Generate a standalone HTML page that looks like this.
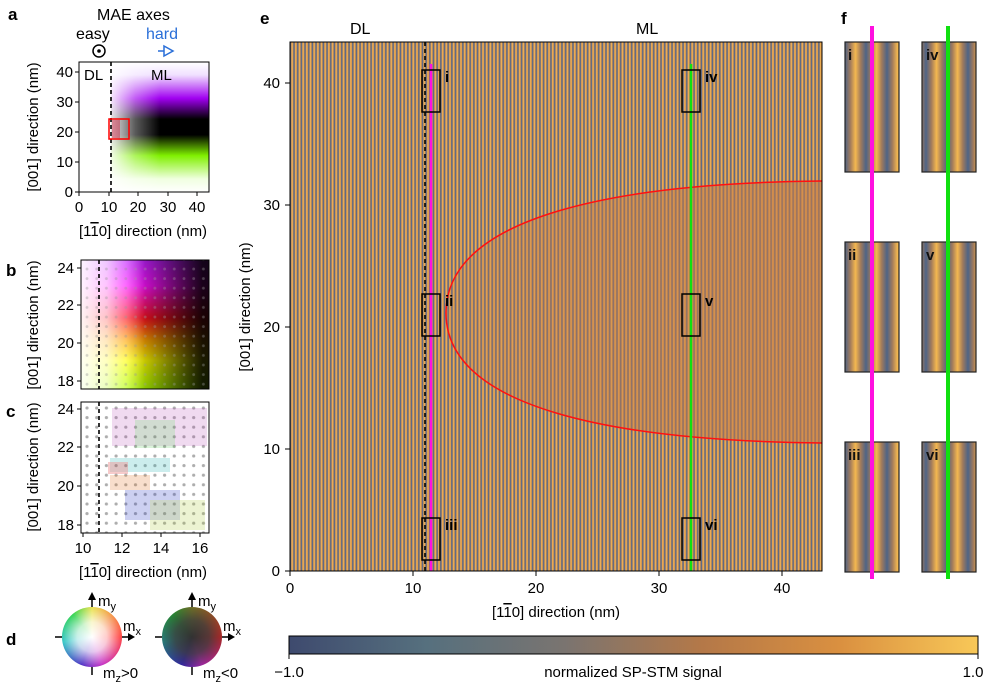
<!DOCTYPE html>
<html><head><meta charset="utf-8"><style>
html,body{margin:0;padding:0;background:#fff;}
svg{display:block;font-family:"Liberation Sans",Arial,sans-serif;}
.sph{position:absolute;width:60px;height:60px;border-radius:50%;}
</style></head><body>
<div style="position:relative;width:996px;height:684px;">
<svg width="996" height="684" viewBox="0 0 996 684" xmlns="http://www.w3.org/2000/svg" style="position:absolute;left:0;top:0">
<defs>
 <linearGradient id="stripe" x1="0" x2="1" y1="0" y2="0">
  <stop offset="0" stop-color="#56688a"/><stop offset="0.2" stop-color="#5e6a86"/>
  <stop offset="0.45" stop-color="#e8a04c"/><stop offset="0.6" stop-color="#f6bc58"/>
  <stop offset="0.8" stop-color="#d8924a"/>
  <stop offset="1" stop-color="#56688a"/>
 </linearGradient>
 <linearGradient id="stripeF" x1="0" x2="1" y1="0" y2="0">
  <stop offset="0" stop-color="#4e6486"/><stop offset="0.25" stop-color="#a07a5c"/>
  <stop offset="0.5" stop-color="#f4b850"/><stop offset="0.75" stop-color="#a07a5c"/>
  <stop offset="1" stop-color="#4e6486"/>
 </linearGradient>
 <pattern id="pe" x="290" y="0" width="3.67" height="10" patternUnits="userSpaceOnUse">
  <rect width="3.67" height="10" fill="url(#stripe)"/>
 </pattern>
 <pattern id="pf" x="845" y="0" width="21" height="10" patternUnits="userSpaceOnUse">
  <rect width="21" height="10" fill="url(#stripeF)"/>
 </pattern>
 <pattern id="pf2" x="926" y="0" width="21" height="10" patternUnits="userSpaceOnUse">
  <rect width="21" height="10" fill="url(#stripeF)"/>
 </pattern>
 <linearGradient id="fade" x1="0" x2="1">
  <stop offset="0" stop-color="#c07a4a" stop-opacity="0.15"/>
  <stop offset="0.3" stop-color="#c07a4a" stop-opacity="0.4"/>
  <stop offset="1" stop-color="#c47c48" stop-opacity="0.6"/>
 </linearGradient>
 <linearGradient id="cbar" x1="0" x2="1">
  <stop offset="0" stop-color="#3e4a6e"/><stop offset="0.2" stop-color="#56707e"/>
  <stop offset="0.4" stop-color="#7a7470"/><stop offset="0.6" stop-color="#b47848"/>
  <stop offset="0.8" stop-color="#da9040"/><stop offset="1" stop-color="#f8c858"/>
 </linearGradient>
 <linearGradient id="aV" x1="0" x2="0" y1="0" y2="1">
  <stop offset="0" stop-color="#ffffff"/><stop offset="0.1" stop-color="#f0e0ff"/>
  <stop offset="0.28" stop-color="#a000f0"/>
  <stop offset="0.44" stop-color="#000"/><stop offset="0.56" stop-color="#000"/>
  <stop offset="0.72" stop-color="#80f000"/><stop offset="0.9" stop-color="#f0ffe0"/><stop offset="1" stop-color="#ffffff"/>
 </linearGradient>
 <radialGradient id="aH" cx="0" cy="0.5" r="1" fx="0" fy="0.5" gradientTransform="translate(0,0) scale(1,1)">
  <stop offset="0" stop-color="#fff" stop-opacity="0"/>
  <stop offset="1" stop-color="#fff" stop-opacity="0"/>
 </radialGradient>
 <linearGradient id="aL" x1="0" x2="1">
  <stop offset="0" stop-color="#fff" stop-opacity="0.9"/><stop offset="0.25" stop-color="#fff" stop-opacity="0.35"/>
  <stop offset="0.5" stop-color="#fff" stop-opacity="0"/>
 </linearGradient>
 <linearGradient id="bV" x1="0" x2="0" y1="0" y2="1">
  <stop offset="0" stop-color="#c020ff"/><stop offset="0.2" stop-color="#ff10ff"/>
  <stop offset="0.45" stop-color="#ff1020"/><stop offset="0.62" stop-color="#ffa000"/>
  <stop offset="0.78" stop-color="#ffff00"/><stop offset="1" stop-color="#b0ff00"/>
 </linearGradient>
 <linearGradient id="bK" x1="0" x2="1">
  <stop offset="0.35" stop-color="#000" stop-opacity="0"/><stop offset="0.95" stop-color="#000" stop-opacity="0.9"/>
 </linearGradient>
 <linearGradient id="bW" x1="0" x2="1">
  <stop offset="0" stop-color="#fff" stop-opacity="0.95"/><stop offset="0.2" stop-color="#fff" stop-opacity="0.75"/>
  <stop offset="0.5" stop-color="#fff" stop-opacity="0"/>
 </linearGradient>
 <pattern id="dots" x="84" y="266" width="9.7" height="9.6" patternUnits="userSpaceOnUse">
  <circle cx="3" cy="3" r="1.4" fill="#999" fill-opacity="0.4"/>
 </pattern>
 <pattern id="dotsc" x="84" y="405" width="9.7" height="9.6" patternUnits="userSpaceOnUse">
  <circle cx="3" cy="3" r="1.6" fill="#777"/>
 </pattern>
 <clipPath id="ce"><rect x="290" y="42" width="532" height="529"/></clipPath>
</defs>

<g font-weight="bold" font-size="17">
<text x="8" y="20">a</text><text x="6" y="276">b</text><text x="6" y="417">c</text>
<text x="6" y="645">d</text><text x="260" y="24">e</text><text x="841" y="24">f</text>
</g>

<!-- panel a -->
<text x="97" y="20" font-size="16">MAE axes</text>
<text x="76" y="39" font-size="16">easy</text>
<text x="146" y="39" font-size="16" fill="#2a6fd8">hard</text>
<circle cx="99" cy="51" r="6" fill="none" stroke="#000" stroke-width="1.5"/><circle cx="99" cy="51" r="1.8"/>
<path d="M158,51 H164 M164,46 L173,51 L164,56Z" stroke="#2a6fd8" stroke-width="1.5" fill="none"/>
<rect x="111" y="62" width="98" height="130" fill="url(#aV)"/>
<rect x="111" y="62" width="98" height="130" fill="url(#aL)"/>
<rect x="112" y="120" width="8" height="18" fill="#d02040" opacity="0.45"/>
<rect x="79" y="62" width="130" height="130" fill="none" stroke="#000" stroke-width="1"/>
<line x1="111" y1="62" x2="111" y2="192" stroke="#000" stroke-width="1.6" stroke-dasharray="4,3"/>
<rect x="109" y="119" width="20" height="20" fill="none" stroke="#f00" stroke-width="1.5"/>
<text x="84" y="80" font-size="15">DL</text><text x="151" y="80" font-size="15">ML</text>
<g font-size="15" text-anchor="end">
<text x="73" y="77">40</text><text x="73" y="107">30</text><text x="73" y="137">20</text><text x="73" y="167">10</text><text x="73" y="197">0</text>
</g>
<g stroke="#000"><path d="M75,72H79M75,102H79M75,132H79M75,162H79M75,192H79M79,192V196M109,192V196M138,192V196M168,192V196M197,192V196"/></g>
<g font-size="15" text-anchor="middle">
<text x="79" y="212">0</text><text x="109" y="212">10</text><text x="138" y="212">20</text><text x="168" y="212">30</text><text x="197" y="212">40</text>
</g>
<text x="143" y="236" font-size="15" text-anchor="middle">[1<tspan text-decoration="overline">1</tspan>0] direction (nm)</text>
<text transform="translate(38,127) rotate(-90)" font-size="15" text-anchor="middle">[001] direction (nm)</text>

<!-- panel b -->
<rect x="81" y="260" width="128" height="129" fill="url(#bV)"/>
<rect x="81" y="260" width="128" height="129" fill="url(#bK)"/>
<rect x="81" y="260" width="128" height="129" fill="url(#bW)"/>
<rect x="81" y="260" width="128" height="129" fill="url(#dots)"/>
<rect x="81" y="260" width="128" height="129" fill="none" stroke="#000"/>
<line x1="99" y1="260" x2="99" y2="389" stroke="#000" stroke-width="1.6" stroke-dasharray="4,3"/>
<g font-size="15" text-anchor="end">
<text x="74" y="273">24</text><text x="74" y="310">22</text><text x="74" y="348">20</text><text x="74" y="386">18</text>
</g>
<path d="M77,268H81M77,305H81M77,343H81M77,381H81" stroke="#000"/>
<text transform="translate(38,325) rotate(-90)" font-size="15" text-anchor="middle">[001] direction (nm)</text>

<!-- panel c -->
<rect x="81" y="402" width="128" height="131" fill="#fff"/>
<rect x="81" y="402" width="128" height="131" fill="url(#dotsc)" opacity="0.6"/>
<g opacity="0.5">
<rect x="112" y="408" width="95" height="38" fill="#b030b0" opacity="0.35"/>
<rect x="135" y="420" width="40" height="28" fill="#30c030" opacity="0.35"/>
<rect x="110" y="458" width="60" height="14" fill="#20b0b0" opacity="0.45"/>
<rect x="108" y="462" width="20" height="12" fill="#e03030" opacity="0.5"/>
<rect x="110" y="475" width="40" height="15" fill="#e07020" opacity="0.45"/>
<rect x="125" y="490" width="55" height="30" fill="#2030c0" opacity="0.45"/>
<rect x="150" y="500" width="55" height="30" fill="#a0c020" opacity="0.4"/>
</g>
<rect x="81" y="402" width="128" height="131" fill="none" stroke="#000"/>
<line x1="99" y1="402" x2="99" y2="533" stroke="#000" stroke-width="1.6" stroke-dasharray="4,3"/>
<g font-size="15" text-anchor="end">
<text x="74" y="414">24</text><text x="74" y="452">22</text><text x="74" y="491">20</text><text x="74" y="530">18</text>
</g>
<path d="M77,409H81M77,447H81M77,486H81M77,525H81M83,533V537M122,533V537M161,533V537M200,533V537" stroke="#000"/>
<g font-size="15" text-anchor="middle">
<text x="83" y="553">10</text><text x="122" y="553">12</text><text x="161" y="553">14</text><text x="200" y="553">16</text>
</g>
<text x="143" y="577" font-size="15" text-anchor="middle">[1<tspan text-decoration="overline">1</tspan>0] direction (nm)</text>
<text transform="translate(38,467) rotate(-90)" font-size="15" text-anchor="middle">[001] direction (nm)</text>

<!-- panel d axes -->
<g stroke="#000" stroke-width="1.5">
<path d="M55,637H62M122,637H128M92,667V675M92,607V600"/>
<path d="M155,637H162M222,637H228M192,667V675M192,607V600"/>
</g>
<path d="M128,633L135,637L128,641Z M88,600L92,592L96,600Z M228,633L235,637L228,641Z M188,600L192,592L196,600Z"/>
<g font-size="15">
<text x="98" y="606">m<tspan font-size="11" dy="4">y</tspan></text>
<text x="123" y="631">m<tspan font-size="11" dy="4">x</tspan></text>
<text x="103" y="678">m<tspan font-size="11" dy="4">z</tspan><tspan dy="-4">&gt;0</tspan></text>
<text x="198" y="606">m<tspan font-size="11" dy="4">y</tspan></text>
<text x="223" y="631">m<tspan font-size="11" dy="4">x</tspan></text>
<text x="203" y="678">m<tspan font-size="11" dy="4">z</tspan><tspan dy="-4">&lt;0</tspan></text>
</g>

<!-- panel e -->
<text x="350" y="34" font-size="16">DL</text><text x="636" y="34" font-size="16">ML</text>
<rect x="290" y="42" width="532" height="529" fill="url(#pe)"/>
<g clip-path="url(#ce)">
<path d="M822,181 C620,183 446,215 446,313 C446,410 620,441 822,443 Z" fill="url(#fade)"/>
<path d="M822,181 C620,183 446,215 446,313 C446,410 620,441 822,443" fill="none" stroke="#ff1010" stroke-width="1.5"/>
</g>
<line x1="425" y1="42" x2="425" y2="571" stroke="#000" stroke-width="1.6" stroke-dasharray="4,3"/>
<line x1="431" y1="64" x2="431" y2="571" stroke="#ff10e0" stroke-width="2.5"/>
<line x1="691" y1="64" x2="691" y2="571" stroke="#10e010" stroke-width="2.5"/>
<g fill="none" stroke="#000" stroke-width="1.5">
<rect x="422" y="70" width="18" height="42"/><rect x="422" y="294" width="18" height="42"/><rect x="422" y="518" width="18" height="42"/>
<rect x="682" y="70" width="18" height="42"/><rect x="682" y="294" width="18" height="42"/><rect x="682" y="518" width="18" height="42"/>
</g>
<g font-size="15" font-weight="bold">
<text x="445" y="82">i</text><text x="445" y="306">ii</text><text x="445" y="530">iii</text>
<text x="705" y="82">iv</text><text x="705" y="306">v</text><text x="705" y="530">vi</text>
</g>
<rect x="290" y="42" width="532" height="529" fill="none" stroke="#000"/>
<g font-size="15" text-anchor="end">
<text x="280" y="88">40</text><text x="280" y="210">30</text><text x="280" y="332">20</text><text x="280" y="454">10</text><text x="280" y="576">0</text>
</g>
<path d="M285,83H290M285,205H290M285,327H290M285,449H290M285,571H290M290,571V576M413,571V576M536,571V576M659,571V576M782,571V576" stroke="#000"/>
<g font-size="15" text-anchor="middle">
<text x="290" y="593">0</text><text x="413" y="593">10</text><text x="536" y="593">20</text><text x="659" y="593">30</text><text x="782" y="593">40</text>
</g>
<text x="556" y="617" font-size="15" text-anchor="middle">[1<tspan text-decoration="overline">1</tspan>0] direction (nm)</text>
<text transform="translate(250,307) rotate(-90)" font-size="15" text-anchor="middle">[001] direction (nm)</text>

<rect x="289" y="636" width="689" height="18" fill="url(#cbar)" stroke="#000"/>
<path d="M289,654V659M978,654V659" stroke="#000"/>
<text x="289" y="677" font-size="15" text-anchor="middle">−1.0</text>
<text x="633" y="677" font-size="15" text-anchor="middle">normalized SP-STM signal</text>
<text x="973" y="677" font-size="15" text-anchor="middle">1.0</text>

<!-- panel f -->
<g stroke="#222" stroke-width="1.2">
<rect x="845" y="42" width="54" height="130" fill="url(#pf)"/>
<rect x="845" y="242" width="54" height="130" fill="url(#pf)"/>
<rect x="845" y="442" width="54" height="130" fill="url(#pf)"/>
<rect x="922" y="42" width="54" height="130" fill="url(#pf2)"/>
<rect x="922" y="242" width="54" height="130" fill="url(#pf2)"/>
<rect x="922" y="442" width="54" height="130" fill="url(#pf2)"/>
</g>
<line x1="872" y1="26" x2="872" y2="579" stroke="#ff10e0" stroke-width="4"/>
<line x1="948" y1="26" x2="948" y2="579" stroke="#10e010" stroke-width="4"/>
<g font-size="15" font-weight="bold" fill="#111">
<text x="848" y="60">i</text><text x="848" y="260">ii</text><text x="848" y="460">iii</text>
<text x="926" y="60">iv</text><text x="926" y="260">v</text><text x="926" y="460">vi</text>
</g>
</svg>
<div class="sph" style="left:62px;top:607px;background:radial-gradient(circle at 50% 50%, rgba(255,255,255,1) 0%, rgba(255,255,255,0.75) 35%, rgba(255,255,255,0) 75%), conic-gradient(from 0deg, #e8e040, #ff3030 90deg, #c020c0 160deg, #4020c0 200deg, #20c0c0 260deg, #20d040 320deg, #e8e040 360deg);"></div>
<div class="sph" style="left:162px;top:607px;background:radial-gradient(circle at 50% 50%, rgba(50,50,50,1) 0%, rgba(60,60,60,0.8) 40%, rgba(60,60,60,0) 85%), conic-gradient(from 0deg, #808020, #d02020 90deg, #c020c0 160deg, #3020c0 200deg, #209090 260deg, #20a030 320deg, #808020 360deg);"></div>
</div>
</body></html>
